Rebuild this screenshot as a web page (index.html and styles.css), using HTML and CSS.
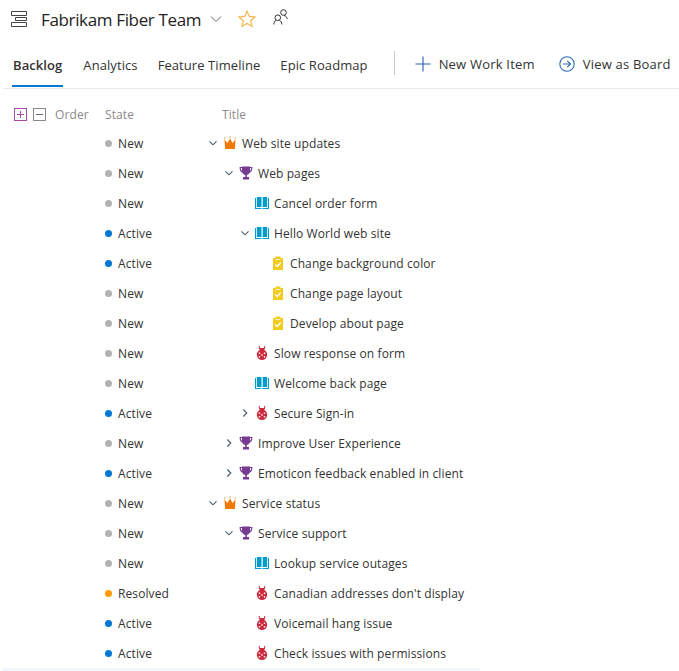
FILE: index.html
```html
<!DOCTYPE html>
<html lang="en">
<head>
    <meta charset="UTF-8">
    <meta name="viewport" content="width=device-width, initial-scale=1.0">
    <title>Fabrikam Fiber Team</title>
    <link rel="stylesheet" href="styles.css">
</head>
<body>
    <svg class="defs" width="0" height="0">
        <symbol id="crown" viewBox="0 0 14 14">
            <path fill="#f5780a" d="M1.500 3.500l3 3.500L7 2.500 9.500 7l3-3.500-.6 9.500H2.100z"/>
            <rect fill="#f8a050" x="1" y="1.500" width="1.300" height="1.300"/>
            <rect fill="#f8a050" x="6.350" y=".5" width="1.300" height="1.300"/>
            <rect fill="#f8a050" x="11.700" y="1.500" width="1.300" height="1.300"/>
        </symbol>
        <symbol id="trophy" viewBox="0 0 14 14">
            <path fill="none" stroke="#773b93" stroke-width="1.200" d="M3 1.500H1.200c0 2.800 1 4.300 3 4.600M11 1.500h1.800c0 2.800-1 4.300-3 4.600"/>
            <path fill="#773b93" d="M3 .5h8v4.500c0 2.200-1.500 3.600-3.200 3.900V11H10v2.500H4V11h2.200V8.900C4.500 8.600 3 7.200 3 5z"/>
        </symbol>
        <symbol id="book" viewBox="0 0 14 14">
            <path fill="#009ccc" d="M0 2h1v10h5.500v1H0z M7.500 13v-1H13V2h1v11z"/>
            <path fill="#009ccc" d="M1.800 1h4.700v10H1.800z M7.700 1h4.500v10H7.700z"/>
        </symbol>
        <symbol id="task" viewBox="0 0 14 14">
            <path fill="#f2cb1d" d="M2 2h2.500V.5h5V2H12v12.500H2z"/>
            <path fill="none" stroke="#fff" stroke-width="1.300" d="M4.300 8.500l2 2 3.500-4"/>
            <rect fill="#fff" x="4.500" y="3" width="5" height=".8"/>
        </symbol>
        <symbol id="bug" viewBox="0 0 14 14">
            <path fill="none" stroke="#cc293d" stroke-width="1" d="M4.300 0v2.500h1.500M9.700 0v2.500H8.200"/>
            <rect fill="#cc293d" x="4.500" y="2" width="5" height="3"/>
            <ellipse fill="#cc293d" cx="7" cy="8.800" rx="5.200" ry="5.200"/>
            <path fill="#fff" d="M3.800 6.600h1.400v1.500H3.800zM8.800 6.600h1.400v1.500H8.800zM3.800 10h1.400v1.500H3.800zM8.800 10h1.400v1.500H8.800zM6.300 8.200h1.400v1.500H6.300z"/>
        </symbol>
        <symbol id="open" viewBox="0 0 10 10">
            <path fill="none" stroke="#44586b" stroke-width="1.100" d="M1.500 3.300L5 6.800l3.500-3.500"/>
        </symbol>
        <symbol id="closed" viewBox="0 0 10 10">
            <path fill="none" stroke="#44586b" stroke-width="1.100" d="M3.300 1.500L6.800 5 3.300 8.500"/>
        </symbol>
    </svg>

    <header class="team-bar">
        <svg class="team-icon" width="16" height="16" viewBox="0 0 16 16">
            <path fill="none" stroke="#444" stroke-width="1" d="M.5.500h15v4H.5zM4.500 6.500h11v3h-11zM.5 11.500h15v4H.5z"/>
        </svg>
        <h1 class="team-name">Fabrikam Fiber Team</h1>
        <svg class="team-caret" width="12" height="12" viewBox="0 0 12 12">
            <path fill="none" stroke="#666" stroke-width="1" d="M1 3.500l5 5 5-5"/>
        </svg>
        <svg class="team-star" width="18" height="18" viewBox="0 0 18 18">
            <path fill="none" stroke="#f7b64a" stroke-width="1.200" d="M9 1.200l2.300 5.200 5.700.6-4.300 3.800 1.300 5.600L9 13.500l-5 2.900 1.300-5.600L1 7l5.700-.6z"/>
        </svg>
        <svg class="team-people" width="16" height="16" viewBox="0 0 16 16">
            <circle fill="none" stroke="#333" stroke-width="1" cx="10.500" cy="3.500" r="2.800"/>
            <path fill="none" stroke="#333" stroke-width="1" d="M11 6.500c1.800.3 3 1.700 3.300 3.500"/>
            <circle fill="none" stroke="#333" stroke-width="1" cx="4.800" cy="8.700" r="2.800"/>
            <path fill="none" stroke="#333" stroke-width="1" d="M.8 15.500c0-2 1-3.600 2.400-4.200M8.800 15.500c0-2-1-3.600-2.400-4.200"/>
        </svg>
    </header>

    <nav class="tabs">
        <a class="tab tab-active">Backlog</a>
        <a class="tab">Analytics</a>
        <a class="tab">Feature Timeline</a>
        <a class="tab">Epic Roadmap</a>
        <span class="tabs-sep"></span>
        <a class="action">
            <svg width="16" height="16" viewBox="0 0 16 16"><path fill="none" stroke="#2b5fa8" stroke-width="1.100" d="M8 .5v15M.5 8h15"/></svg>
            New Work Item
        </a>
        <a class="action">
            <svg width="16" height="16" viewBox="0 0 16 16"><circle fill="none" stroke="#2b6cb0" stroke-width="1.100" cx="8" cy="8" r="7.200"/><path fill="none" stroke="#2b6cb0" stroke-width="1.100" d="M4 8h7.500M8.300 4.800L11.500 8l-3.200 3.200"/></svg>
            View as Board
        </a>
    </nav>

    <div class="grid-head">
        <span class="col-order">
            <span class="box box-plus"></span>
            <span class="box box-minus"></span>
            <span class="order-label">Order</span>
        </span>
        <span class="col-state">State</span>
        <span class="col-title">Title</span>
    </div>

    <div class="rows">
        <div class="row"><span class="state"><i class="dot new"></i>New</span><span class="title lvl-0"><svg class="chev"><use href="#open"/></svg><svg class="icon"><use href="#crown"/></svg>Web site updates</span></div>
        <div class="row"><span class="state"><i class="dot new"></i>New</span><span class="title lvl-1"><svg class="chev"><use href="#open"/></svg><svg class="icon"><use href="#trophy"/></svg>Web pages</span></div>
        <div class="row"><span class="state"><i class="dot new"></i>New</span><span class="title lvl-2"><span class="chev"></span><svg class="icon"><use href="#book"/></svg>Cancel order form</span></div>
        <div class="row"><span class="state"><i class="dot active"></i>Active</span><span class="title lvl-2"><svg class="chev"><use href="#open"/></svg><svg class="icon"><use href="#book"/></svg>Hello World web site</span></div>
        <div class="row"><span class="state"><i class="dot active"></i>Active</span><span class="title lvl-3"><span class="chev"></span><svg class="icon"><use href="#task"/></svg>Change background color</span></div>
        <div class="row"><span class="state"><i class="dot new"></i>New</span><span class="title lvl-3"><span class="chev"></span><svg class="icon"><use href="#task"/></svg>Change page layout</span></div>
        <div class="row"><span class="state"><i class="dot new"></i>New</span><span class="title lvl-3"><span class="chev"></span><svg class="icon"><use href="#task"/></svg>Develop about page</span></div>
        <div class="row"><span class="state"><i class="dot new"></i>New</span><span class="title lvl-2"><span class="chev"></span><svg class="icon"><use href="#bug"/></svg>Slow response on form</span></div>
        <div class="row"><span class="state"><i class="dot new"></i>New</span><span class="title lvl-2"><span class="chev"></span><svg class="icon"><use href="#book"/></svg>Welcome back page</span></div>
        <div class="row"><span class="state"><i class="dot active"></i>Active</span><span class="title lvl-2"><svg class="chev"><use href="#closed"/></svg><svg class="icon"><use href="#bug"/></svg>Secure Sign-in</span></div>
        <div class="row"><span class="state"><i class="dot new"></i>New</span><span class="title lvl-1"><svg class="chev"><use href="#closed"/></svg><svg class="icon"><use href="#trophy"/></svg>Improve User Experience</span></div>
        <div class="row"><span class="state"><i class="dot active"></i>Active</span><span class="title lvl-1"><svg class="chev"><use href="#closed"/></svg><svg class="icon"><use href="#trophy"/></svg>Emoticon feedback enabled in client</span></div>
        <div class="row"><span class="state"><i class="dot new"></i>New</span><span class="title lvl-0"><svg class="chev"><use href="#open"/></svg><svg class="icon"><use href="#crown"/></svg>Service status</span></div>
        <div class="row"><span class="state"><i class="dot new"></i>New</span><span class="title lvl-1"><svg class="chev"><use href="#open"/></svg><svg class="icon"><use href="#trophy"/></svg>Service support</span></div>
        <div class="row"><span class="state"><i class="dot new"></i>New</span><span class="title lvl-2"><span class="chev"></span><svg class="icon"><use href="#book"/></svg>Lookup service outages</span></div>
        <div class="row"><span class="state"><i class="dot resolved"></i>Resolved</span><span class="title lvl-2"><span class="chev"></span><svg class="icon"><use href="#bug"/></svg>Canadian addresses don't display</span></div>
        <div class="row"><span class="state"><i class="dot active"></i>Active</span><span class="title lvl-2"><span class="chev"></span><svg class="icon"><use href="#bug"/></svg>Voicemail hang issue</span></div>
        <div class="row"><span class="state"><i class="dot active"></i>Active</span><span class="title lvl-2"><span class="chev"></span><svg class="icon"><use href="#bug"/></svg>Check issues with permissions</span></div>
    </div>
    <div class="selected-strip"></div>
</body>
</html>
```

FILE: styles.css
```css
html, body {
    height: 100%;
}

body {
    margin: 0;
    height: 671px;
    overflow: hidden;
    background: #fff;
    color: #333;
    font-family: "Open Sans", "Liberation Sans", sans-serif;
    font-size: 12px;
    letter-spacing: 0.1px;
}

.defs {
    display: block;
    height: 0;
}

.team-bar {
    display: flex;
    align-items: center;
    height: 38px;
    padding-left: 11px;
}

.team-name {
    margin: 0 0 0 14px;
    font-size: 17px;
    font-weight: 400;
    color: #222;
    letter-spacing: -0.35px;
}

.team-caret {
    margin-left: 9px;
}

.team-star {
    margin-left: 16px;
}

.team-people {
    margin-left: 17px;
    margin-top: -5px;
}

.tabs {
    display: flex;
    align-items: center;
    height: 50px;
    margin-left: 3px;
    border-bottom: 1px solid #eaeaea;
    font-size: 13px;
    letter-spacing: 0.08px;
    white-space: nowrap;
}

.tab {
    display: flex;
    flex-shrink: 0;
    align-items: center;
    height: 50px;
    box-sizing: border-box;
    padding-top: 4px;
    margin-right: 20px;
    color: #333;
}

.tab:first-child {
    margin-left: 9px;
}

.tab-active {
    font-weight: 600;
    border-bottom: 2px solid #0078d4;
    margin-bottom: 2px;
    padding-top: 8px;
    padding-left: 1px;
    padding-right: 1px;
}

.tabs-sep {
    flex-shrink: 0;
    width: 1px;
    height: 24px;
    background: #c8c8c8;
    margin: 0 20px 0 6px;
}

.action {
    display: flex;
    flex-shrink: 0;
    align-items: center;
    gap: 8px;
    margin-right: 24px;
    padding-top: 2px;
    color: #333;
    letter-spacing: 0.2px;
}

.grid-head {
    display: flex;
    align-items: center;
    height: 39px;
    box-sizing: border-box;
    padding-top: 12px;
    color: #8a8a8a;
}

.col-order {
    display: flex;
    align-items: center;
    width: 105px;
    padding-left: 14px;
    box-sizing: border-box;
}

.col-state {
    width: 117px;
}

.box {
    position: relative;
    width: 11px;
    height: 11px;
    border: 1px solid #8a8a8a;
    margin-right: 6px;
}

.box::before {
    content: "";
    position: absolute;
    left: 2px;
    right: 2px;
    top: 5px;
    height: 1px;
    background: #666;
}

.box-plus {
    border-color: #a24ca6;
}

.box-plus::before {
    background: #a24ca6;
}

.box-plus::after {
    content: "";
    position: absolute;
    top: 2px;
    bottom: 2px;
    left: 5px;
    width: 1px;
    background: #a24ca6;
}

.order-label {
    margin-left: 3px;
}

.row {
    display: flex;
    align-items: center;
    height: 30px;
}

.state {
    display: flex;
    align-items: center;
    width: 204px;
    padding-left: 105px;
    box-sizing: border-box;
    flex-shrink: 0;
}

.dot {
    width: 7px;
    height: 7px;
    border-radius: 50%;
    margin-right: 6px;
}

.dot.new { background: #b2b2b2; }
.dot.active { background: #0078d4; }
.dot.resolved { background: #ff9d00; }

.title {
    display: flex;
    align-items: center;
}

.lvl-0 { padding-left: 4px; }
.lvl-1 { padding-left: 20px; }
.lvl-2 { padding-left: 36px; }
.lvl-3 { padding-left: 52px; }

.chev {
    display: inline-block;
    width: 10px;
    height: 10px;
    margin-right: 5px;
}

.icon {
    width: 14px;
    height: 14px;
    margin-right: 5px;
}

.selected-strip {
    width: 477px;
    height: 3px;
    margin-left: 3px;
    background: #eff6fc;
}
```
